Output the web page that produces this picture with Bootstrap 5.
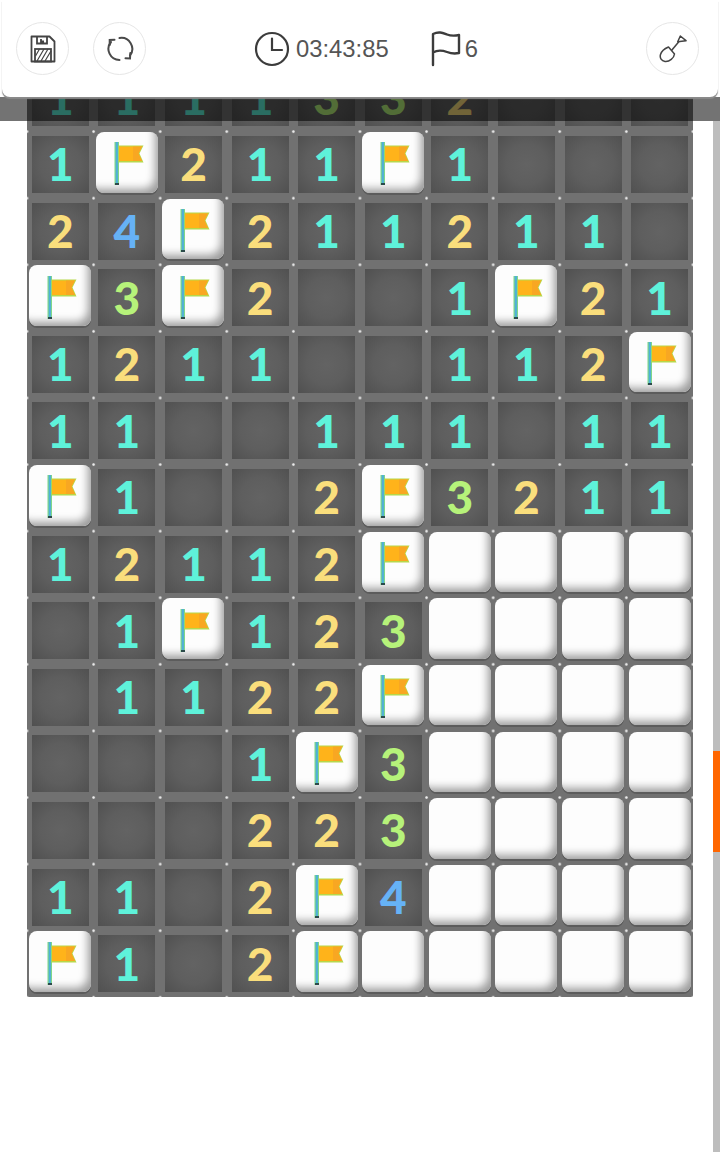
<!DOCTYPE html>
<html lang="en">
<head>
    <meta charset="UTF-8">
    <meta name="viewport" content="width=device-width, initial-scale=1.0">
    <title>Minesweeper</title>
    <link href="https://cdn.jsdelivr.net/npm/bootstrap@5.3.0/dist/css/bootstrap.min.css" rel="stylesheet">
    <style>
        html, body {
            height: 1152px;
            overflow: hidden;
            background-color: #fff;
        }
        .game-page {
            height: 1152px;
            overflow: hidden;
            padding: 64.6px 0 0 27px;
        }
        .top-bar {
            top: 0;
            left: 2px;
            right: 2px;
            height: 97px;
            padding: 0 19px 0 14px;
            background-color: #fff;
            border-radius: 0 0 8px 8px;
            box-shadow: 0 2px 1px #8a8a8a;
            z-index: 3;
            color: #555;
            font-family: "Liberation Sans", Arial, sans-serif;
        }
        .round-tool {
            width: 53px;
            height: 53px;
            border: 1px solid #e6e6e6;
            border-radius: 50%;
            background: #fff;
            padding: 0;
        }
        .stat-line {
            margin-left: 108px;
            font-size: 23.8px;
            line-height: 1;
        }
        .clock-glyph {
            margin-right: 6px;
        }
        .flag-glyph {
            margin: 0 4px 0 42px;
        }
        .dim-band {
            top: 97px;
            left: 0;
            right: 0;
            height: 24px;
            background-color: rgba(0, 0, 0, .55);
            z-index: 2;
        }
        .scroll-track {
            top: 121px;
            right: 0;
            bottom: 0;
            width: 7px;
            background-color: #bdbdbd;
            z-index: 1;
        }
        .scroll-thumb {
            margin-top: 630px;
            height: 101px;
            background-color: #ff6600;
        }
        .mine-board {
            display: grid;
            grid-template-columns: repeat(10, 66.6px);
            grid-auto-rows: 66.6px;
            width: 666px;
            background-color: #717171;
            /* small light studs where the grid lines cross */
            background-image: radial-gradient(circle at center, #f0f0f0 .8px, transparent 1.7px);
            background-size: 66.6px 66.6px;
            background-position: -33.3px -33.3px;
        }
        .tile {
            display: flex;
            align-items: center;
            justify-content: center;
        }
        .tile-open {
            margin: 4.8px;
            background: radial-gradient(circle, #636363 0%, #5e5e5e 50%, #505050 100%);
            font-family: Lato, "Liberation Sans", sans-serif;
            font-weight: 900;
            font-size: 46px;
            line-height: 1;
        }
        .tile-closed {
            margin: 1px 2.3px 5.2px 2.3px;
            background-color: #fdfdfd;
            border-radius: 8px;
            box-shadow: inset -7px -8px 8px -4px #9c9c9c, 0 2px 0 #5c5c5c;
        }
        .n1 { color: #5ef2da; }
        .n2 { color: #fade7c; }
        .n3 { color: #b6f27a; }
        .n4 { color: #66b2f6; }
    </style>
</head>
<body>
    <svg width="0" height="0" class="position-absolute">
        <symbol id="flagIcon" viewBox="0 0 62 62">
            <rect x="18.500" y="11" width="4.500" height="43" fill="#7fd68a"/>
            <rect x="19.700" y="11" width="2.200" height="42" fill="#4fb0d8"/>
            <rect x="19" y="52" width="4" height="2" fill="#2b4a4a"/>
            <path d="M22.500 14.500h25l-4 8 4 9h-25z" fill="#b6d84a"/>
            <path d="M23 15.500h23l-3.500 7 3.500 7.500H23z" fill="#ffb31a"/>
            <path d="M37 15.500h9l-3.500 7 3.500 7.500h-9z" fill="#f8a722"/>
        </symbol>
    </svg>

    <div class="game-page position-relative">
        <div class="top-bar position-absolute d-flex align-items-center">
            <div class="d-flex gap-4">
                <button type="button" class="round-tool d-flex align-items-center justify-content-center">
                    <svg width="28" height="30" viewBox="0 0 28 30" fill="none" stroke="#444" stroke-width="1.800">
                        <path d="M2.500 2.500h18l5 5v20h-23z" stroke-linejoin="round"/>
                        <path d="M8 2.500v7h10v-7M12 5v2.500h3"/>
                        <rect x="6" y="15" width="16" height="12.500"/>
                        <path d="M8 27l7-12M12 27l7-12M16 27l6-10M6.500 22l4-7" stroke-width="1.200"/>
                    </svg>
                </button>
                <button type="button" class="round-tool d-flex align-items-center justify-content-center">
                    <svg width="28" height="28" viewBox="0 0 28 28" fill="none" stroke="#4a4a4a" stroke-width="2" stroke-linecap="round">
                        <path d="M5 7A11 11 0 0 0 13.500 25"/>
                        <path d="M8.500 4.800L3.700 5 3.700 10"/>
                        <path d="M13.500 3A11 11 0 0 1 24 20.500"/>
                        <path d="M24.300 18L24 23.500 19.500 23.200"/>
                    </svg>
                </button>
            </div>
            <div class="d-flex align-items-center stat-line">
                <svg width="36" height="36" viewBox="0 0 36 36" fill="none" stroke="#3c3c3c" stroke-width="2.200" stroke-linecap="round" class="clock-glyph">
                    <circle cx="18" cy="18" r="16"/>
                    <path d="M18 7.500V19h10"/>
                </svg>
                <span>03:43:85</span>
                <svg width="30" height="36" viewBox="0 0 30 36" fill="none" stroke="#3c3c3c" stroke-width="2.400" stroke-linecap="round" stroke-linejoin="round" class="flag-glyph">
                    <path d="M2 34V3c6-3 10-1 14 .5s7 1.500 12 .500v18c-5 1-8 .5-12-1s-9-2.500-14 .5"/>
                </svg>
                <span>6</span>
            </div>
            <button type="button" class="round-tool d-flex align-items-center justify-content-center ms-auto">
                <svg width="28" height="30" viewBox="0 0 28 30" fill="none" stroke="#444" stroke-width="1.500" stroke-linejoin="round">
                    <path d="M9.500 13L15.500 20C15 24 10.500 28 6 27.500C2.500 27 .5 24 1.500 20.500C2.500 17 6 14.500 9.500 13z"/>
                    <path d="M12.500 16.500L20 7.500"/>
                    <path d="M21.300 2L27 6.700L18.700 7.700z"/>
                </svg>
            </button>
        </div>
        <div class="dim-band position-absolute"></div>
        <div class="scroll-track position-absolute">
            <div class="scroll-thumb"></div>
        </div>
        <div id="board" class="mine-board"></div>
    </div>

    <script>
        // . opened blank, F flagged, U still covered, digits are neighbour counts
        const rows = [
            '1111332...',
            '1F211F1...',
            '24F211211.',
            'F3F2..1F21',
            '1211..112F',
            '11..111.11',
            'F1..2F3211',
            '12112FUUUU',
            '.1F123UUUU',
            '.1122FUUUU',
            '...1F3UUUU',
            '...223UUUU',
            '11.2F4UUUU',
            'F1.2FUUUUU'
        ];

        let html = '';
        rows.forEach(function(row) {
            row.split('').forEach(function(ch) {
                if (ch === 'F') {
                    html += '<div class="tile tile-closed"><svg width="62" height="62"><use href="#flagIcon"/></svg></div>';
                } else if (ch === 'U') {
                    html += '<div class="tile tile-closed"></div>';
                } else if (ch === '.') {
                    html += '<div class="tile tile-open"></div>';
                } else {
                    html += `<div class="tile tile-open n${ch}">${ch}</div>`;
                }
            });
        });
        document.getElementById('board').innerHTML = html;
    </script>
    <script src="https://cdn.jsdelivr.net/npm/bootstrap@5.3.0/dist/js/bootstrap.bundle.min.js"></script>
</body>
</html>
